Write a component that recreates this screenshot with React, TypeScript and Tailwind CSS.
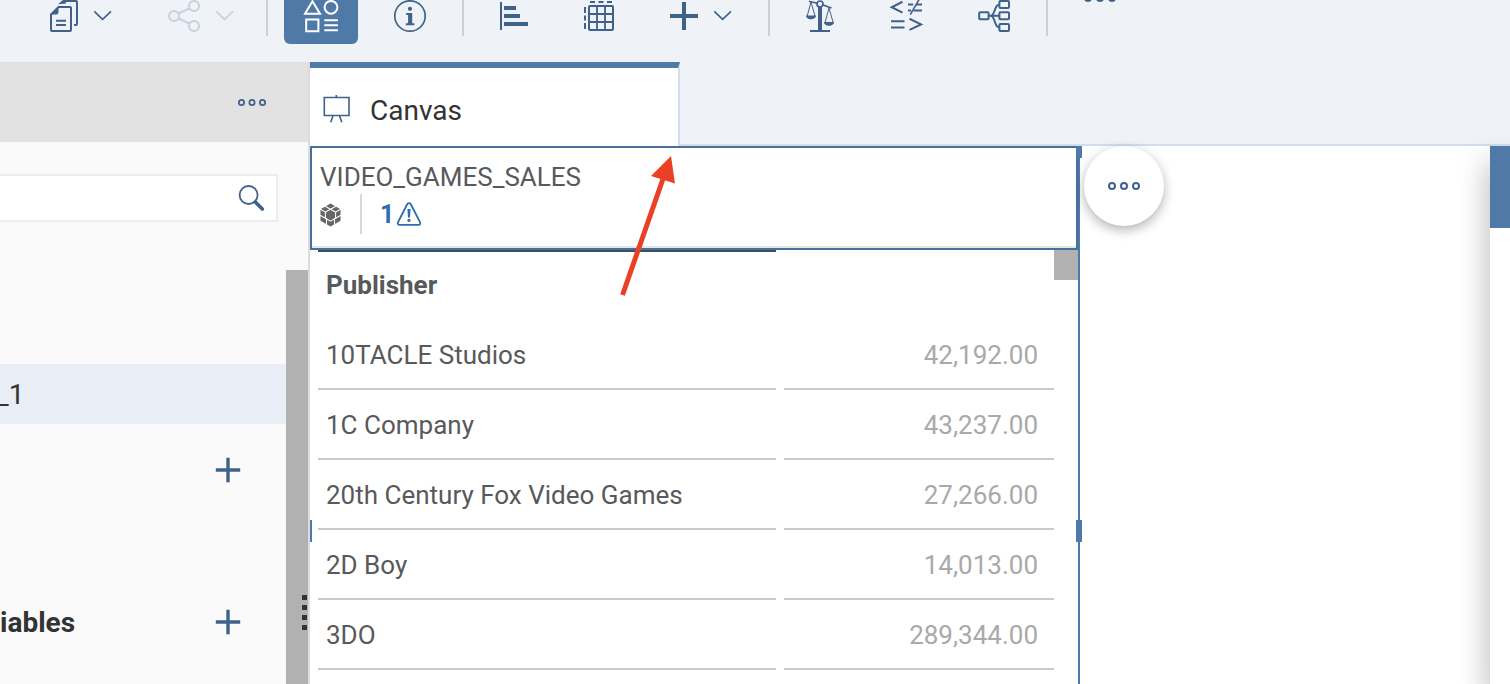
import type { ReactNode } from "react";

const rows = [
  { publisher: "10TACLE Studios", sales: "42,192.00" },
  { publisher: "1C Company", sales: "43,237.00" },
  { publisher: "20th Century Fox Video Games", sales: "27,266.00" },
  { publisher: "2D Boy", sales: "14,013.00" },
  { publisher: "3DO", sales: "289,344.00" },
];

function Glyph({ children, className = "h-8 w-8", box = "0 0 32 32" }: { children: ReactNode; className?: string; box?: string }) {
  return (
    <svg className={`${className} shrink-0 overflow-visible`} viewBox={box} fill="none" stroke="currentColor" strokeWidth="2" aria-hidden="true">
      {children}
    </svg>
  );
}

function Chevron() {
  return (
    <Glyph className="h-8 w-[22px]" box="0 0 22 32">
      <path d="M2.3 11.3 10.6 19.3 19 11.3" strokeWidth="1.6" />
    </Glyph>
  );
}

function Dots({ className = "h-2 w-8" }: { className?: string }) {
  return (
    <Glyph className={className} box="0 0 32 8">
      <circle cx="4" cy="4" r="3" />
      <circle cx="16" cy="4" r="3" />
      <circle cx="28" cy="4" r="3" />
    </Glyph>
  );
}

function Plus() {
  return (
    <Glyph className="h-[26px] w-[26px]" box="0 0 26 26">
      <path d="M13 .8v24.4M.8 13h24.4" strokeWidth="3.4" />
    </Glyph>
  );
}

function ToolButton({ label, children }: { label: string; children: ReactNode }) {
  return (
    <button type="button" aria-label={label} className="flex h-14 shrink-0 items-center gap-3">
      {children}
    </button>
  );
}

function Divider() {
  return <div className="mb-2 h-10 w-0.5 shrink-0 bg-[#cdd1d6]" />;
}

function Toolbar() {
  return (
    <header className="flex h-[62px] shrink-0 items-end overflow-hidden bg-[#eff3f8] pb-[18px] pl-12 text-[#3f618a]">
      <div className="flex gap-[54px]">
        <ToolButton label="Copy">
          <Glyph>
            <path d="M10.5 7H22a1 1 0 0 1 1 1v22a1 1 0 0 1-1 1H4a1 1 0 0 1-1-1V14.5z" />
            <path d="M2.5 14.5 10.5 6.5V12a2.5 2.5 0 0 1-2.5 2.5z" fill="currentColor" stroke="none" />
            <path d="M14 2.5 17 1h11a1 1 0 0 1 1 1v22a1 1 0 0 1-1 1h-2" />
            <path d="M10 4.3 15 0h3v3.6z" fill="currentColor" stroke="none" />
            <path d="M8 20.8h10M8 25h10" />
          </Glyph>
          <Chevron />
        </ToolButton>
        <button type="button" aria-label="Share" disabled className="flex h-14 shrink-0 items-center gap-3.5 text-[#c5d1df]">
          <Glyph>
            <circle cx="6" cy="16" r="5" />
            <circle cx="26" cy="6" r="5" />
            <circle cx="26" cy="26" r="5" />
            <path d="m10.5 13.5 11-5.2M10.5 18.5l11 5.2" />
          </Glyph>
          <Chevron />
        </button>
      </div>
      <div className="ml-[30px] flex items-end gap-4">
        <Divider />
        <button type="button" aria-label="Designer" aria-pressed="true" className="flex h-14 w-[74px] items-center justify-center rounded-md bg-[#4f7aa8] text-white">
          <Glyph className="h-8 w-9" box="0 0 36 32">
            <path d="M9.500 1.300 2 13.700h15z" />
            <circle cx="28" cy="7.3" r="6.4" />
            <path d="M3.200 19.500h12.200v11.700H3.200zM21.300 20.300h13.600M21.300 25.300h13.600M21.300 30.300h13.600" />
          </Glyph>
        </button>
      </div>
      <div className="ml-9 flex items-end gap-9">
        <ToolButton label="Information">
          <Glyph>
            <circle cx="16" cy="16" r="15.2" strokeWidth="1.7" />
            <circle cx="16" cy="8.8" r="2.1" fill="currentColor" stroke="none" />
            <path d="M12.200 13h6v10.200h2.200v2h-8.600v-2h2.300V15h-1.900z" fill="currentColor" stroke="none" />
          </Glyph>
        </ToolButton>
        <Divider />
      </div>
      <div className="ml-[34px] flex gap-[53px]">
        <ToolButton label="Chart">
          <Glyph>
            <path d="M3 2v28" />
            <path d="M6 8h12M6 16h16M6 24h24" strokeWidth="4" />
          </Glyph>
        </ToolButton>
        <ToolButton label="Table">
          <Glyph>
            <rect x="6" y="6" width="24" height="24" rx="1" />
            <path d="M14 6v24M22 6v24M6 14h24M6 22h24" strokeWidth="1.8" />
            <path d="M7 2h5M15.500 2h5M24 2h5M2 7v6M2 15.500v5M2 23v6" />
          </Glyph>
        </ToolButton>
        <ToolButton label="Add">
          <Glyph>
            <path d="M16 2v28M2 16h28" strokeWidth="4" />
          </Glyph>
          <Chevron />
        </ToolButton>
      </div>
      <div className="ml-[34px] flex items-end gap-[34px]">
        <Divider />
        <div className="flex gap-[55px]">
          <ToolButton label="Balance">
            <Glyph>
              <path d="M16 7v23" strokeWidth="4" />
              <path d="M6 31h20" />
              <circle cx="16" cy="4" r="3" strokeWidth="1.7" />
              <path d="m5 1.300 8 2M19 5l8.500 3" strokeWidth="1.7" />
              <path d="M7 2 3.200 16M7 2l4 14M25 8l-3.800 14M25 8l4 14" strokeWidth="1" />
              <path d="M2 15.500h10c0 5-10 5-10 0zM20 22h10c0 5-10 5-10 0z" fill="currentColor" stroke="none" />
            </Glyph>
          </ToolButton>
          <ToolButton label="Compare">
            <Glyph>
              <path d="M11.500 1.800.8 7.300l10.700 5.300M18.500 18.800l11.500 5.600-11.500 5.500" strokeWidth="2.1" />
              <path d="M17 4.600h5.200M25 4.600h6M17 10.600h3M22.500 10.600h8.500M0 21.200h13.500M0 27.600h13.500" strokeWidth="2" />
              <path d="M19.300 14.700 28.300-1" strokeWidth="1.6" />
            </Glyph>
          </ToolButton>
          <ToolButton label="Hierarchy">
            <Glyph>
              <rect x="1.200" y="12.300" width="9.400" height="7" rx="1" />
              <rect x="21.400" y="1" width="9.600" height="7" rx="1" />
              <rect x="21.400" y="12.300" width="9.600" height="7" rx="1" />
              <rect x="21.400" y="24" width="9.600" height="7" rx="1" />
              <path d="M11 15.800h10M11 15.800h1.500c5 0 3.500-11 8.500-11M12.500 15.800c5 0 3.500 11.500 8.500 11.500" />
            </Glyph>
          </ToolButton>
        </div>
      </div>
      <div className="ml-9 flex items-end gap-9">
        <Divider />
        <button type="button" aria-label="More tools" className="flex h-[50px] items-start">
          <Dots />
        </button>
      </div>
    </header>
  );
}

function Sidebar() {
  return (
    <aside className="relative flex w-[310px] shrink-0 flex-col border-r-2 border-[#dcdcdc] bg-[#fafafa] text-[28px] text-[#333]">
      <div className="flex h-20 shrink-0 items-center justify-end bg-[#e2e2e2] pr-[42px] text-[#3f618a]">
        <button type="button" aria-label="Panel options">
          <Dots className="h-[7px] w-7" />
        </button>
      </div>
      <div className="mt-8 mr-[30px] flex h-12 shrink-0 items-center border-2 border-l-0 border-[#ededed] bg-white pr-3 text-[#3f618a]">
        <input type="search" aria-label="Search" className="h-full min-w-0 flex-1 bg-transparent outline-none" />
        <button type="button" aria-label="Run search">
          <Glyph className="h-[26px] w-[26px]" box="0 0 26 26">
            <circle cx="10.600" cy="10" r="9" strokeWidth="1.800" />
            <path d="m17.300 17 7 7" strokeWidth="3.600" strokeLinecap="round" />
          </Glyph>
        </button>
      </div>
      <div className="mt-12 flex min-h-0 flex-1">
        <div className="min-w-0 flex-1 pt-[94px]">
          <div className="flex h-[60px] items-center bg-[#e9eef6] pt-0.5">
            <span className="-ml-1">_1</span>
          </div>
          <div className="flex h-[92px] items-center justify-end pr-[45px] text-[#3f618a]">
            <button type="button" aria-label="Add item">
              <Plus />
            </button>
          </div>
          <div className="mt-15 flex h-[92px] items-center justify-between pr-[45px]">
            <h2 className="pt-0.5 font-bold">iables</h2>
            <button type="button" aria-label="Add variable" className="text-[#3f618a]">
              <Plus />
            </button>
          </div>
        </div>
        <div className="w-[22px] shrink-0 bg-[#b1b1b1]" />
      </div>
      <div className="absolute right-px bottom-[54px] flex flex-col gap-[5px]">
        <i className="h-[5px] w-[5px] bg-[#333]" />
        <i className="h-[5px] w-[5px] bg-[#333]" />
        <i className="h-[5px] w-[5px] bg-[#333]" />
        <i className="h-[5px] w-[5px] bg-[#333]" />
      </div>
    </aside>
  );
}

function WidgetHeader() {
  return (
    <div className="mr-0.5 h-[104px] border-2 border-[#48709c]">
      <div className="h-full border-b-2 border-[#e5e5e5] pt-3 pl-2">
        <h1 className="text-[26px] leading-[34px] text-[#58595b]">VIDEO_GAMES_SALES</h1>
        <div className="flex h-10 items-center">
          <Glyph className="mt-0.5 h-6 w-[21px] text-[#666]" box="0 0 22 24">
            <path d="M11 0 21.500 6v12L11 24 .500 18V6z" fill="currentColor" stroke="none" />
            <g stroke="#fff" strokeWidth="1.100">
              <path d="m11 6 5.300 3v6.400L11 18.400l-5.300-3V9z" />
              <path d="M11 6 5 2.600M11 6l6-3.400M5.700 9 0 5.800M16.300 9 22 5.800M5.700 15.400 0 12.200M16.300 15.400l5.700-3.200M6.800 16v6.500M15.200 16v6.500" />
            </g>
          </Glyph>
          <div className="ml-[19px] h-10 w-0.5 bg-[#d5d8dc]" />
          <button type="button" aria-label="1 warning" className="ml-[18px] flex items-center gap-0.5 text-[25px] font-bold text-[#2a6eb5]">
            <span className="pt-0.5">1</span>
            <Glyph className="h-6 w-[26px]" box="0 0 26 24">
              <path d="M11.300 2c.8-1.300 2.600-1.300 3.400 0l9.300 18.200c.7 1.300 0 2.600-1.500 2.600H3.500C2 22.800 1.300 21.500 2 20.200z" strokeWidth="1.800" />
              <path d="M11.400 7h3.200l-.6 8.500h-2z" fill="currentColor" stroke="none" />
              <circle cx="13" cy="18.300" r="1.600" fill="currentColor" stroke="none" />
            </Glyph>
          </button>
        </div>
      </div>
    </div>
  );
}

function SalesTable() {
  return (
    <div className="flex items-start justify-between">
      <table className="w-[752px] table-fixed border-separate border-spacing-x-2 border-spacing-y-0 text-[26px] leading-[34px]">
        <colgroup>
          <col className="w-[458px]" />
          <col />
        </colgroup>
        <thead>
          <tr className="h-[70px]">
            <th scope="col" className="border-t-2 border-[#3c4f60] px-2 pb-0.5 text-left font-bold text-[#58595b]">
              Publisher
            </th>
            <td />
          </tr>
        </thead>
        <tbody>
          {rows.map((row) => (
            <tr key={row.publisher} className="h-[70px]">
              <th scope="row" className="border-b-2 border-[#cacaca] px-2 pt-0.5 text-left font-normal text-[#58595b]">
                {row.publisher}
              </th>
              <td className="border-b-2 border-[#cacaca] px-4 pt-0.5 text-right text-[#a9a9a9]">{row.sales}</td>
            </tr>
          ))}
        </tbody>
      </table>
      <div className="-ml-2 h-[30px] w-6 shrink-0 bg-[#b1b1b1]" />
    </div>
  );
}

export default function App() {
  return (
    <div className="flex h-screen flex-col overflow-hidden bg-white font-['Roboto',sans-serif]">
      <Toolbar />
      <div className="flex min-h-0 flex-1">
        <Sidebar />
        <main className="relative flex min-w-0 flex-1 flex-col">
          <nav className="flex h-[84px] shrink-0 bg-[#eff3f8]">
            <button type="button" className="flex w-[370px] items-center gap-5 border-t-[6px] border-r-2 border-t-[#4f7aa8] border-r-[#d2deeb] bg-white pt-1 pl-3 text-[28px] text-[#333]">
              <Glyph className="h-7 w-7 text-[#3f618a]" box="0 0 28 28">
                <path d="M2.300 2.500h24.700v18H2.300zM14.300 0v2.500M11 20.800l-2.300 6.500M17.500 20.800l2.300 6.500" strokeWidth="1.600" />
              </Glyph>
              <span className="pt-1">Canvas</span>
            </button>
            <div className="flex-1 border-b-2 border-[#d2deeb]" />
          </nav>
          <div className="flex min-h-0 flex-1 justify-between">
            <section className="relative w-[770px] shrink-0 border-r-2 border-[#4f7aa8]">
              <div className="-mr-0.5">
                <WidgetHeader />
              </div>
              <SalesTable />
              <i className="absolute top-0 -right-1 h-3 w-1.5 bg-[#4f7aa8]" />
              <i className="absolute top-[374px] -right-1 h-[22px] w-1.5 bg-[#4f7aa8]" />
              <i className="absolute top-[374px] left-0 h-[22px] w-0.5 bg-[#4f7aa8]" />
              <button
                type="button"
                aria-label="More actions"
                className="absolute top-0 left-[774px] flex h-20 w-20 items-center justify-center rounded-full bg-white text-[#3f618a] shadow-[0_4px_12px_rgba(0,0,0,0.3)]"
              >
                <Dots />
              </button>
            </section>
            <aside className="w-5 shrink-0 bg-white shadow-[0_16px_30px_rgba(0,0,0,0.35)]">
              <div className="h-[82px] bg-[#4f7aa8]" />
            </aside>
          </div>
          <svg className="pointer-events-none absolute top-[92px] left-[310px] h-36 w-14" viewBox="0 0 56 144" fill="#ea4126" aria-hidden="true">
            <path d="M2.500 141 44 22" stroke="#ea4126" strokeWidth="5" />
            <path d="M51 2 31 22l24 7.500z" />
          </svg>
        </main>
      </div>
    </div>
  );
}
